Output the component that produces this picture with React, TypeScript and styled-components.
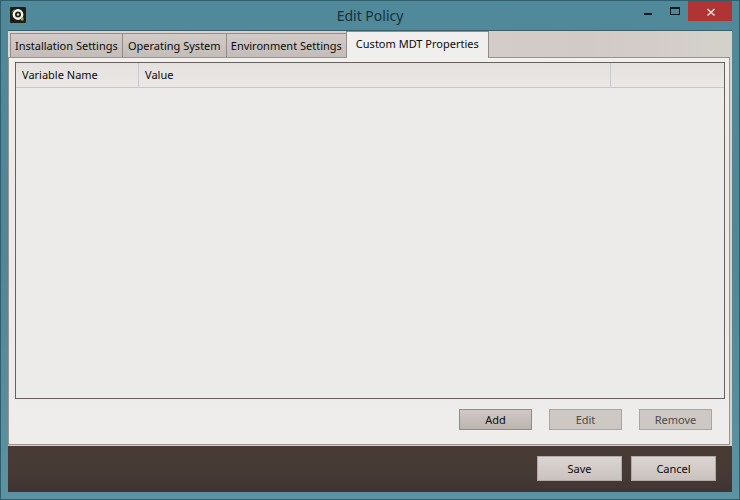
import React, { useState } from "react";
import styled, { createGlobalStyle } from "styled-components";

const GlobalStyle = createGlobalStyle`
  * { box-sizing: border-box; }
  body {
    margin: 0;
    font-family: "Noto Sans", "Open Sans", sans-serif;
    font-size: 11px;
    line-height: 16px;
    color: #0c0b0b;
  }
  button { font: inherit; color: inherit; }
`;

const Window = styled.div`
  display: flex;
  flex-direction: column;
  min-height: 100vh;
  padding: 0 7px 7px;
  border: 1px solid #2f5f6c;
  background: linear-gradient(#50899a, #4f8797 50%, #5c93a3);
`;

const TitleBar = styled.header`
  display: grid;
  grid-template-columns: 1fr auto 1fr;
  height: 29px;
`;

const AppIcon = styled.svg`
  display: block;
  margin: 6px 0 0 2px;
`;

const Title = styled.h1`
  margin: 5px 0 0;
  font-size: 14px;
  line-height: 20px;
  font-weight: 400;
  color: #14313a;
`;

const WindowControls = styled.div`
  display: flex;
  justify-content: flex-end;
  align-items: flex-start;
`;

const ControlButton = styled.button<{ $close?: boolean }>`
  display: block;
  width: ${(p) => (p.$close ? "44px" : "27px")};
  height: 20px;
  padding: 0;
  border: 0;
  background: ${(p) => (p.$close ? "#b03434" : "transparent")};

  svg { display: block; margin: 0 auto; }
`;

const Client = styled.main`
  display: flex;
  flex: 1;
  flex-direction: column;
  border-top: 1px solid #38616c;
  background: #d8d1cd;
`;

const TabList = styled.div`
  display: flex;
  align-items: flex-end;
  height: 26px;
  padding-left: 2px;
  background: linear-gradient(90deg, #dcd5d1, #d2cac7 80%, #d4d1cb);
`;

const Tab = styled.button`
  min-width: 104px;
  height: 24px;
  padding: 0 4px;
  border: 1px solid #948c89;
  border-right-width: 0;
  border-bottom: 0;
  background: linear-gradient(#d2cbc7, #c4bcb8);
  white-space: nowrap;

  &[aria-selected="true"] {
    position: relative;
    height: 27px;
    margin-bottom: -1px;
    padding: 0 9px 2px;
    border-right-width: 1px;
    background: #f1efed;
  }
`;

const Panel = styled.section`
  display: flex;
  flex: 1;
  flex-direction: column;
  margin: 0 2px 1px 0;
  padding: 4px 4px 14px 6px;
  border: 1px solid #999490;
  background: linear-gradient(#f2f0ec, #eceae8 30%, #efedec);
`;

const ListFrame = styled.div`
  flex: 1;
  border: 1px solid #66615f;
  background: #edebe9;
`;

const PropertyTable = styled.table`
  width: 100%;
  table-layout: fixed;
  border-collapse: separate;
  border-spacing: 0;
`;

const HeaderCell = styled.th<{ $width?: string }>`
  width: ${(p) => p.$width ?? "auto"};
  height: 25px;
  padding: 0 6px;
  border-right: 1px solid #c9cad1;
  border-bottom: 1px solid #c6c8d0;
  background: linear-gradient(#e5e1df, #eae7e5);
  font-weight: 400;
  text-align: left;

  &:last-child { border-right: 0; }
`;

const ListActions = styled.div`
  display: flex;
  justify-content: flex-end;
  gap: 17px;
  padding: 10px 13px 0 0;
`;

const ActionButton = styled.button`
  width: 73px;
  height: 21px;
  padding: 0;
  border: 1px solid #948b87;
  background: linear-gradient(#d0c9c5, #bdb4b0);

  &:disabled {
    border-color: #aaa5a1;
    background: #cdc8c4;
    color: #4d4a48;
  }
`;

const Footer = styled.footer`
  display: flex;
  justify-content: flex-end;
  gap: 9px;
  padding: 10px 16px;
  border-bottom: 1px solid #34393a;
  background: linear-gradient(#493b34, #453a36 60%, #403532);
`;

const DialogButton = styled.button`
  width: 85px;
  height: 25px;
  padding: 0;
  border: 1px solid #b2aaa6;
  background: linear-gradient(#dbd5d2, #cac2be);
`;

const tabs = [
  "Installation Settings",
  "Operating System",
  "Environment Settings",
  "Custom MDT Properties",
];

export default function App() {
  const [active, setActive] = useState(3);

  return (
    <>
      <GlobalStyle />
      <Window>
        <TitleBar>
          <AppIcon width="16" height="16" viewBox="0 0 16 16" aria-hidden="true">
            <rect width="16" height="16" rx="1" fill="#1d1e18" />
            <circle cx="8" cy="7.5" r="4.2" fill="#1d1e18" stroke="#f6f7ee" strokeWidth="2.4" />
            <circle cx="8" cy="7.5" r="1.2" fill="#dfe1c5" />
            <path d="M11 10.5h2.5v3H11z" fill="#a9b52f" />
            <path d="M2 5.5L4.5 2.5" stroke="#8c9438" />
          </AppIcon>
          <Title>Edit Policy</Title>
          <WindowControls>
            <ControlButton aria-label="Minimize">
              <svg width="27" height="20" aria-hidden="true">
                <path d="M10 12h8v2h-8z" fill="#10191c" />
              </svg>
            </ControlButton>
            <ControlButton aria-label="Maximize">
              <svg width="27" height="20" aria-hidden="true">
                <path d="M9 6h10v8H9zM10 8v5h8V8z" fill="#10191c" fillRule="evenodd" />
              </svg>
            </ControlButton>
            <ControlButton $close aria-label="Close">
              <svg width="44" height="20" aria-hidden="true">
                <path d="M19.5 8l7 6.5M26.5 8l-7 6.5" stroke="#f3dedb" strokeWidth="1.6" />
              </svg>
            </ControlButton>
          </WindowControls>
        </TitleBar>
        <Client>
          <TabList role="tablist">
            {tabs.map((label, i) => (
              <Tab
                key={label}
                role="tab"
                id={`tab-${i}`}
                aria-selected={i === active}
                aria-controls="policy-panel"
                onClick={() => setActive(i)}
              >
                {label}
              </Tab>
            ))}
          </TabList>
          <Panel role="tabpanel" id="policy-panel" aria-labelledby={`tab-${active}`}>
            <ListFrame>
              <PropertyTable>
                <thead>
                  <tr>
                    <HeaderCell scope="col" $width="123px">Variable Name</HeaderCell>
                    <HeaderCell scope="col">Value</HeaderCell>
                    <HeaderCell $width="113px" />
                  </tr>
                </thead>
                <tbody />
              </PropertyTable>
            </ListFrame>
            <ListActions>
              <ActionButton>Add</ActionButton>
              <ActionButton disabled>Edit</ActionButton>
              <ActionButton disabled>Remove</ActionButton>
            </ListActions>
          </Panel>
          <Footer>
            <DialogButton>Save</DialogButton>
            <DialogButton>Cancel</DialogButton>
          </Footer>
        </Client>
      </Window>
    </>
  );
}
